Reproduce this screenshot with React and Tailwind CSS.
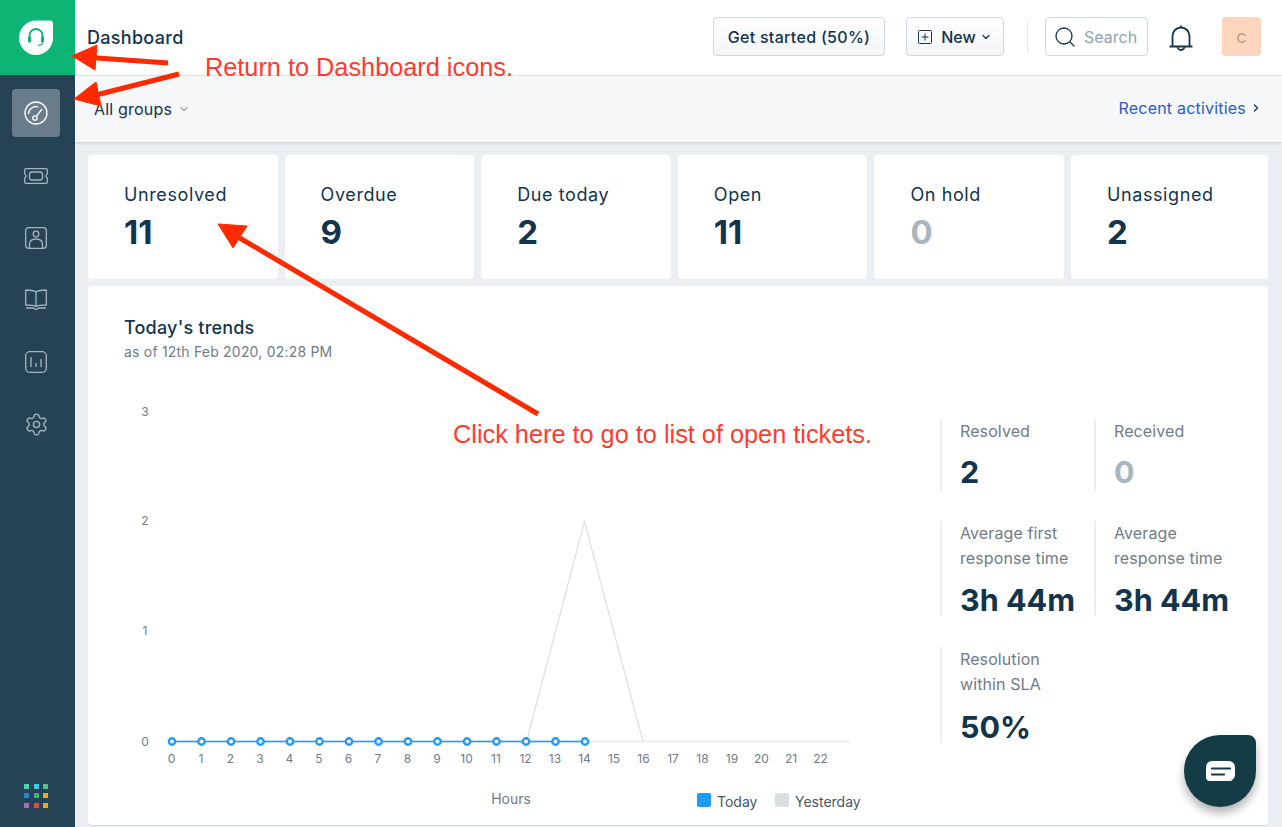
import { Search, ChevronDown, ChevronRight, Settings } from 'lucide-react'

const counters = [
  { label: 'Unresolved', value: '11' },
  { label: 'Overdue', value: '9' },
  { label: 'Due today', value: '2' },
  { label: 'Open', value: '11' },
  { label: 'On hold', value: '0', muted: true },
  { label: 'Unassigned', value: '2' },
]

const dots = ['#4fd1ae', '#3bcbe8', '#52c77f', '#2f80c0', '#36bb6c', '#f5a70f', '#a86bb8', '#e8493a', '#f5a70f']

const tickX = (h) => 172 + h * 29.5

const Logo = () => (
  <svg width="36" height="36" viewBox="0 0 36 36">
    <path d="M18 .5h14a3 3 0 0 1 3 3V18c0 9.400-7.600 17-17 17S1 27.400 1 18 8.600 .5 18 .5z" fill="#fff" />
    <path d="M11.500 18v-2.500a6.500 6.500 0 0 1 13 0V18" fill="none" stroke="#0cb573" strokeWidth="1.800" />
    <rect x="10" y="16.500" width="3" height="6" rx="1" fill="#0cb573" />
    <rect x="23" y="16.500" width="3" height="6" rx="1" fill="#0cb573" />
    <path d="M24.500 22.500c0 1.800-1.500 2.800-4.500 2.800" fill="none" stroke="#0cb573" strokeWidth="1.100" />
  </svg>
)

const Gauge = () => (
  <svg width="24" height="24" viewBox="0 0 24 24" fill="none" stroke="#fff" strokeWidth="1.300">
    <circle cx="12" cy="12" r="11" />
    <path d="M4.500 13a7.500 7.500 0 0 1 10-7" />
    <circle cx="11" cy="17" r="2.200" />
    <path d="M12.400 15.300 18 8" />
  </svg>
)

const Ticket = () => (
  <svg width="24" height="16" viewBox="0 0 24 16" fill="none" stroke="#a5b4c0" strokeWidth="1.300">
    <path d="M2 .700h20a1.300 1.300 0 0 1 1.300 1.300v4a2.200 2.200 0 0 0 0 4v4a1.300 1.300 0 0 1-1.300 1.300H2A1.300 1.300 0 0 1 .700 14v-4a2.200 2.200 0 0 0 0-4V2A1.300 1.300 0 0 1 2 .700z" />
    <rect x="5.500" y="4" width="13" height="8" rx="2.500" />
  </svg>
)

const Contact = () => (
  <svg width="22" height="22" viewBox="0 0 22 22" fill="none" stroke="#a5b4c0" strokeWidth="1.300">
    <rect x=".700" y=".700" width="20.600" height="20.600" rx="3" />
    <circle cx="11" cy="7" r="2.800" />
    <path d="M4.500 21v-3.500c0-3.500 2.800-5.500 6.500-5.500s6.500 2 6.500 5.500V21" />
  </svg>
)

const Book = () => (
  <svg width="22" height="22" viewBox="0 0 22 22" fill="none" stroke="#a5b4c0" strokeWidth="1.300">
    <path d="M11 3C9 1.500 4 1 .700 1v15c3.300 0 8.300 0 10.300 1.500 2-1.500 7-1.500 10.300-1.500V1C18 1 13 1.500 11 3zM11 3v14.500" />
    <path d="M1 19h7l3 1.500 3-1.500h7" />
  </svg>
)

const Report = () => (
  <svg width="22" height="22" viewBox="0 0 22 22" fill="none" stroke="#a5b4c0" strokeWidth="1.300">
    <rect x=".700" y=".700" width="20.600" height="20.600" rx="4" />
    <path d="M6 6v10M11 12v4M16 8v8" />
  </svg>
)

const NewIcon = () => (
  <svg width="14" height="14" viewBox="0 0 14 14" fill="none" stroke="#12344d" strokeWidth="1">
    <rect x=".500" y=".500" width="13" height="13" rx="1" />
    <path d="M7 3.500v7M3.500 7h7" />
  </svg>
)

const BellIcon = () => (
  <svg width="24" height="28" viewBox="0 0 24 28" fill="none" stroke="#12344d" strokeWidth="1.800">
    <path d="M.500 22.500h23M3.500 22.500V12a8.500 8.500 0 0 1 17 0v10.500" />
    <path d="M12 3.500V1.500" />
    <path d="M8.500 22.500a3.500 3.500 0 0 0 7 0" />
  </svg>
)

const Chart = () => (
  <svg width="760" height="420" viewBox="124 400 760 420" className="shrink-0">
    {[[3, 411], [2, 520], [1, 630], [0, 741]].map(([v, y]) => (
      <text key={v} x="145" y={y + 4} textAnchor="middle" fontSize="12" fill="#6f7c87">{v}</text>
    ))}
    <path d="M172 740.500H850" stroke="#ebeff3" strokeWidth="2" />
    <path d="M526.500 740.500 584.500 520.500 643 740.500" fill="none" stroke="#dadfe3" strokeWidth="1.200" />
    <path d="M172 740.500H584" stroke="#1e9bff" strokeWidth="1.500" />
    {Array.from({ length: 15 }, (_, h) => (
      <circle key={h} cx={tickX(h)} cy="740.500" r="3.200" fill="#fff" stroke="#1e9bff" strokeWidth="2.400" />
    ))}
    {Array.from({ length: 23 }, (_, h) => (
      <text key={h} x={tickX(h) - 0.5} y="762" textAnchor="middle" fontSize="12" fill="#6f7c87">{h}</text>
    ))}
    <text x="511" y="803" textAnchor="middle" fontSize="14" fill="#6f7c87">Hours</text>
    <rect x="697" y="792" width="14" height="14" rx="2" fill="#1e9bff" />
    <text x="717" y="806" fontSize="14" fill="#475867">Today</text>
    <rect x="775" y="792" width="14" height="14" rx="2" fill="#dadfe3" />
    <text x="795" y="806" fontSize="14" fill="#475867">Yesterday</text>
  </svg>
)

const Stat = ({ label, value, muted, offset = 'mt-[10px]' }) => (
  <div className="border-l-2 border-[#ebeff3] pl-[18px] w-[154px]">
    <div className="text-base leading-[25px] tracking-[0.1px] text-[#6f7c87] whitespace-pre-line">{label}</div>
    <div className={`text-[30.5px] leading-[40px] font-bold whitespace-nowrap ${offset} ${muted ? 'text-[#a9b5bf]' : 'text-[#12344d]'}`}>{value}</div>
  </div>
)

const Annotations = () => (
  <svg width="1282" height="827" viewBox="0 0 1282 827" className="absolute inset-0 pointer-events-none">
    <g fill="#ff2a00" stroke="#ff2a00" strokeWidth="1">
      <path d="M168 63 90 57.500" strokeWidth="5" />
      <polygon points="72,56 97,45 95,70" />
      <path d="M179 74 92 96" strokeWidth="5" />
      <polygon points="74,99 96,82 101,106" />
      <path d="M538 414 238 237" strokeWidth="5" />
      <polygon points="218,224 247,226 233,248" />
    </g>
  </svg>
)

export default function App() {
  return (
    <div className="relative flex h-[827px] w-[1282px] overflow-hidden bg-[#ebeff3] font-['Inter',sans-serif] text-[#12344d]">
      <aside className="w-[75px] shrink-0 bg-[#264356] flex flex-col items-center pr-[3px]">
        <div className="h-[75px] w-full flex items-center justify-center relative">
          <div className="absolute left-0 top-0 h-[75px] w-[75px] bg-[#0cb573]" />
          <div className="relative"><Logo /></div>
        </div>
        <div className="mt-[14px] w-12 h-12 rounded bg-[#6a7d8c] flex items-center justify-center">
          <Gauge />
        </div>
        <div className="mt-[27px] h-[24px] flex items-center justify-center"><Ticket /></div>
        <div className="mt-[38px] h-[24px] flex items-center justify-center"><Contact /></div>
        <div className="mt-[38px] h-[24px] flex items-center justify-center"><Book /></div>
        <div className="mt-[38px] h-[24px] flex items-center justify-center"><Report /></div>
        <div className="mt-[38px] h-[24px] flex items-center justify-center"><Settings size={25} strokeWidth={1.300} color="#a5b4c0" /></div>
        <div className="mt-auto mb-[19px] grid grid-cols-3 gap-[4.600px]">
          {dots.map((c, i) => (
            <span key={i} className="block w-[5px] h-[5px]" style={{ background: c }} />
          ))}
        </div>
      </aside>

      <main className="flex-1 min-w-0 flex flex-col">
        <header className="h-[76px] shrink-0 bg-white border-b border-[#e4e8ec] flex items-center pl-3 pr-[21px]">
          <h1 className="text-lg font-medium tracking-[0.3px]">Dashboard</h1>
          <div className="ml-auto mb-[2px] flex items-center">
            <button className="h-[39px] w-[172px] rounded border border-[#cfd7df] bg-gradient-to-b from-white to-[#f3f5f7] text-base font-medium tracking-[0.3px]">Get started (50%)</button>
            <button className="ml-[21px] h-[39px] w-[98px] rounded border border-[#cfd7df] bg-gradient-to-b from-white to-[#f3f5f7] text-base font-medium flex items-center justify-center gap-[9px]">
              <NewIcon />
              <span className="flex items-center gap-1">New <ChevronDown size={12} strokeWidth={2.500} /></span>
            </button>
            <span className="ml-[23px] w-px h-[31px] bg-[#e4e8ec]" />
            <div className="ml-[17px] h-[39px] w-[103px] rounded border border-[#cfd7df] flex items-center gap-[7px] pl-[7px]">
              <Search size={24} strokeWidth={1.300} className="shrink-0" />
              <span className="text-base text-[#92a2b1]">Search</span>
            </div>
            <div className="ml-[21px] mt-[2px]"><BellIcon /></div>
            <div className="ml-[29px] w-[39px] h-[39px] rounded-sm bg-[#fdd5bd] flex items-center justify-center text-lg text-[#b9a294]">c</div>
          </div>
        </header>

        <div className="h-[66px] shrink-0 bg-[#f5f7f9] shadow-[0_1px_3px_rgba(18,52,77,0.2)] flex items-center justify-between pl-[19px] pr-5 relative">
          <div className="flex items-center gap-[6px] text-base tracking-[0.2px] -mt-[1px]">All groups <ChevronDown size={12} strokeWidth={1.500} /></div>
          <div className="flex items-center gap-1 text-base tracking-[0.2px] text-[#2c5cc5] -mt-[2px]">Recent activities <ChevronRight size={12} strokeWidth={2.500} className="text-[#12344d]" /></div>
        </div>

        <div className="flex-1 min-h-0 pl-[13px] pr-[14px] pt-[13px] flex flex-col gap-[7px]">
          <div className="grid grid-cols-[repeat(5,189.6px)_1fr] gap-[7px]">
            {counters.map((c) => (
              <div key={c.label} className="h-[124px] bg-white rounded-sm pl-9 pt-[26px]">
                <div className="text-lg leading-[27px] tracking-[0.6px]">{c.label}</div>
                <div className={`text-[33px] leading-[40px] font-bold mt-[4px] ${c.muted ? 'text-[#a9b5bf]' : ''}`}>{c.value}</div>
              </div>
            ))}
          </div>

          <section className="h-[540px] bg-white rounded-sm border-b border-[#cfd7df] pl-9 pt-[28px]">
            <h2 className="text-lg font-medium leading-[27px] tracking-[0.2px]">Today's trends</h2>
            <p className="text-sm leading-[18px] tracking-[0.2px] text-[#6f7c87] mt-[2px]">as of 12th Feb 2020, 02:28 PM</p>
            <div className="flex mt-[40px]">
              <Chart />
              <div className="ml-[56px] pt-[18px] flex flex-col">
                <div className="flex h-[72px]">
                  <Stat label="Resolved" value="2" offset="mt-[8px]" />
                  <Stat label="Received" value="0" muted offset="mt-[8px]" />
                </div>
                <div className="flex h-[95px] mt-[30px]">
                  <Stat label={'Average first\nresponse time'} value="3h 44m" offset="mt-[9px]" />
                  <Stat label={'Average\nresponse time'} value="3h 44m" offset="mt-[9px]" />
                </div>
                <div className="flex h-[96px] mt-[31px]">
                  <Stat label={'Resolution\nwithin SLA'} value="50%" />
                </div>
              </div>
            </div>
          </section>
        </div>
      </main>

      <Annotations />
      <div className="absolute left-[205px] top-[52px] font-['Liberation_Sans',sans-serif] text-[25.300px] leading-[30px] text-[#ff3b30] whitespace-nowrap">Return to Dashboard icons.</div>
      <div className="absolute left-[453px] top-[419px] font-['Liberation_Sans',sans-serif] text-[25.300px] leading-[30px] text-[#ff3b30] whitespace-nowrap">Click here to go to list of open tickets.</div>

      <div className="absolute left-[1184px] top-[735px] w-[72px] h-[72px] bg-[#133c46] rounded-[50%] rounded-tr-lg shadow-[0_6px_10px_rgba(0,0,0,0.3)] flex items-center justify-center">
        <svg width="29" height="20" viewBox="0 0 29 20">
          <path d="M6 0h17a6 6 0 0 1 6 6v8a6 6 0 0 1-3 5l-1 1H4a4 4 0 0 1-4-4V6a6 6 0 0 1 6-6z" fill="#fff" />
          <path d="M6 7.500h18M6 13.500h12" stroke="#133c46" strokeWidth="2.200" strokeLinecap="round" />
        </svg>
      </div>
    </div>
  )
}
